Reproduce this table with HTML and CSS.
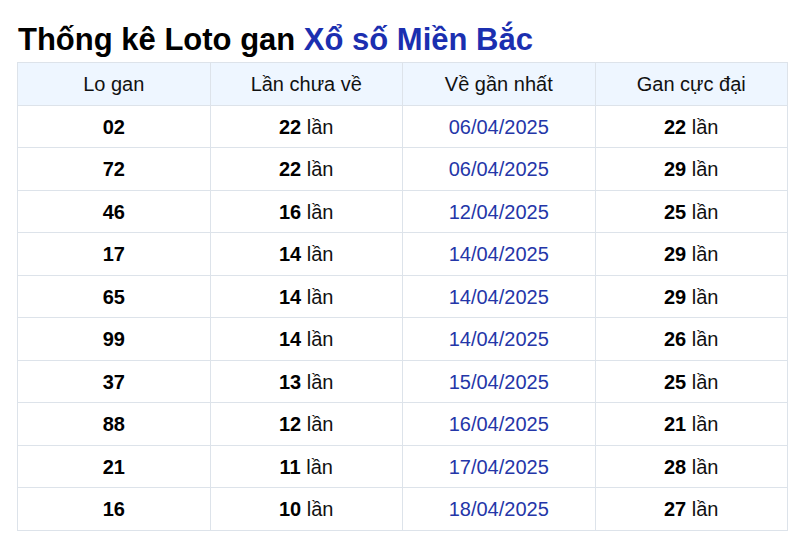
FILE: index.html
```html
<!DOCTYPE html>
<html lang="vi">
<head>
<meta charset="utf-8">
<link rel="stylesheet" href="styles.css">
</head>
<body>
<div class="wrap">
  <h2 class="title">Thống kê Loto gan <span class="hl">Xổ số Miền Bắc</span></h2>
  <table class="tbl">
    <thead>
      <tr><th>Lo gan</th><th>Lần chưa về</th><th>Về gần nhất</th><th>Gan cực đại</th></tr>
    </thead>
    <tbody>
      <tr><td><b>02</b></td><td><b>22</b> lần</td><td class="date">06/04/2025</td><td><b>22</b> lần</td></tr>
      <tr><td><b>72</b></td><td><b>22</b> lần</td><td class="date">06/04/2025</td><td><b>29</b> lần</td></tr>
      <tr><td><b>46</b></td><td><b>16</b> lần</td><td class="date">12/04/2025</td><td><b>25</b> lần</td></tr>
      <tr><td><b>17</b></td><td><b>14</b> lần</td><td class="date">14/04/2025</td><td><b>29</b> lần</td></tr>
      <tr><td><b>65</b></td><td><b>14</b> lần</td><td class="date">14/04/2025</td><td><b>29</b> lần</td></tr>
      <tr><td><b>99</b></td><td><b>14</b> lần</td><td class="date">14/04/2025</td><td><b>26</b> lần</td></tr>
      <tr><td><b>37</b></td><td><b>13</b> lần</td><td class="date">15/04/2025</td><td><b>25</b> lần</td></tr>
      <tr><td><b>88</b></td><td><b>12</b> lần</td><td class="date">16/04/2025</td><td><b>21</b> lần</td></tr>
      <tr><td><b>21</b></td><td><b>11</b> lần</td><td class="date">17/04/2025</td><td><b>28</b> lần</td></tr>
      <tr><td><b>16</b></td><td><b>10</b> lần</td><td class="date">18/04/2025</td><td><b>27</b> lần</td></tr>
    </tbody>
  </table>
</div>
</body>
</html>
```
FILE: styles.css
```css
html, body { margin: 0; padding: 0; background: #fff; }
body { font-family: "Liberation Sans", Arial, sans-serif; color: #111; }
.wrap { padding: 23px 12px 0 17px; }
.title { margin: 0 0 5px 1px; font-size: 31px; line-height: 34px; font-weight: bold; color: #000; }
.hl { color: #1b2fb0; }
.tbl { width: 771px; border-collapse: collapse; table-layout: fixed; font-size: 20px; }
.tbl th, .tbl td { border: 1px solid #dde3ea; text-align: center; height: 39.5px; padding: 2px 0 0; }
.tbl th { background: #eef6ff; font-weight: normal; color: #111; }
.tbl b { color: #000; }
.date { color: #2436a8; }
```
